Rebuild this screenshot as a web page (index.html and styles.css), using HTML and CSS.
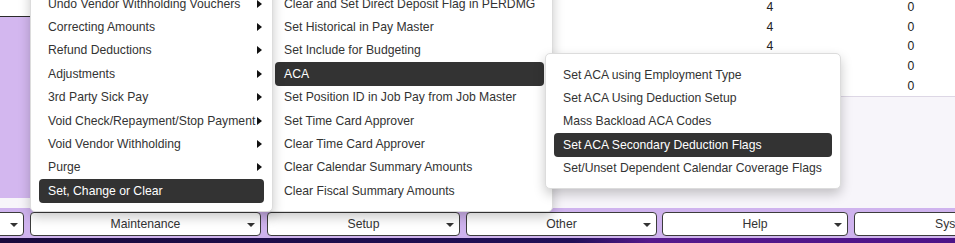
FILE: index.html
```html
<!DOCTYPE html>
<html lang="en">

<head>
    <meta charset="UTF-8">
    <meta name="viewport" content="width=device-width, initial-scale=1.0">
    <title>Payroll Utilities</title>
    <link rel="stylesheet" href="styles.css">
</head>

<body>
    <div class="app">
        <div class="main">
            <div class="side">
                <div class="side-head"></div>
                <div class="side-body"></div>
            </div>

            <div class="content">
                <div class="grid">
                    <div class="row"><span></span><span class="num">4</span><span></span><span class="num">0</span></div>
                    <div class="row"><span></span><span class="num">4</span><span></span><span class="num">0</span></div>
                    <div class="row"><span></span><span class="num">4</span><span></span><span class="num">0</span></div>
                    <div class="row"><span></span><span class="num">4</span><span></span><span class="num">0</span></div>
                    <div class="row"><span></span><span class="num">4</span><span></span><span class="num">0</span></div>
                </div>
            </div>

            <!-- open menu chain: Utilities > Set, Change or Clear > ACA -->
            <ul class="menu menu-main">
                <li class="sub">Undo Vendor Withholding Vouchers</li>
                <li class="sub">Correcting Amounts</li>
                <li class="sub">Refund Deductions</li>
                <li class="sub">Adjustments</li>
                <li class="sub">3rd Party Sick Pay</li>
                <li class="sub">Void Check/Repayment/Stop Payment</li>
                <li class="sub">Void Vendor Withholding</li>
                <li class="sub">Purge</li>
                <li class="active">Set, Change or Clear</li>
            </ul>

            <ul class="menu menu-set">
                <li>Clear and Set Direct Deposit Flag in PERDMG</li>
                <li>Set Historical in Pay Master</li>
                <li>Set Include for Budgeting</li>
                <li class="active">ACA</li>
                <li>Set Position ID in Job Pay from Job Master</li>
                <li>Set Time Card Approver</li>
                <li>Clear Time Card Approver</li>
                <li>Clear Calendar Summary Amounts</li>
                <li>Clear Fiscal Summary Amounts</li>
            </ul>

            <ul class="menu menu-aca">
                <li>Set ACA using Employment Type</li>
                <li>Set ACA Using Deduction Setup</li>
                <li>Mass Backload ACA Codes</li>
                <li class="active">Set ACA Secondary Deduction Flags</li>
                <li>Set/Unset Dependent Calendar Coverage Flags</li>
            </ul>
        </div>

        <div class="toolbar">
            <div class="drop drop-first"></div>
            <div class="drop drop-maint">Maintenance</div>
            <div class="drop drop-setup">Setup</div>
            <div class="drop drop-other">Other</div>
            <div class="drop drop-help">Help</div>
            <div class="drop drop-sys">System</div>
        </div>

        <div class="footer"></div>
    </div>
</body>

</html>
```

FILE: styles.css
```css
* {
    box-sizing: border-box;
}

html,
body {
    margin: 0;
}

body {
    font-family: "Liberation Sans", Arial, sans-serif;
    font-size: 12.2px;
    color: #333;
    overflow: hidden;
}

.app {
    position: relative;
    width: 955px;
    height: 243px;
    display: flex;
    flex-direction: column;
    overflow: hidden;
}

.main {
    height: 208px;
    display: flex;
    background: #f7f5fa;
}

.side {
    width: 120px;
    display: flex;
    flex-direction: column;
    margin-bottom: 10px;
}

.side-head {
    height: 17px;
    background: #fff;
    border-bottom: 1px solid #2b2b2b;
}

.side-body {
    flex: 1;
    background: #d3b7ef;
}

.content {
    flex: 1;
}

.grid {
    margin-top: -3px;
    background: #fff;
    border-bottom: 1px solid #ddd7e5;
}

.row {
    display: grid;
    grid-template-columns: 1fr 62px 79px 62px 13px;
    height: 19.75px;
    align-items: center;
}

.num {
    text-align: center;
    color: #222;
}

/* menus */
.menu {
    position: absolute;
    margin: 0;
    padding: 9px 8px 8px 8px;
    list-style: none;
    background: #fff;
    border: 1px solid #dcdcdc;
    border-radius: 5px;
    box-shadow: 0 5px 12px rgba(0, 0, 0, 0.22);
}

.menu li {
    height: 23.4px;
    padding: 0 2px 0 9px;
    border-radius: 4px;
    display: flex;
    align-items: center;
    justify-content: space-between;
    white-space: nowrap;
}

.menu li.sub::after {
    content: "";
    border-left: 5px solid #111;
    border-top: 4px solid transparent;
    border-bottom: 4px solid transparent;
}

.menu li.active {
    background: #333;
    color: #fff;
}

.menu-main {
    left: 30px;
    top: -18px;
    width: 243px;
    z-index: 2;
}

.menu-set {
    left: 266px;
    top: -18px;
    width: 287px;
    z-index: 1;
}

.menu-aca {
    left: 545px;
    top: 53px;
    width: 296px;
    z-index: 3;
}

/* bottom dropdown bar */
.toolbar {
    height: 30px;
    padding: 4px 0 2px;
    display: flex;
    gap: 6px;
    background: #cfb3ee;
}

.drop {
    position: relative;
    flex: none;
    height: 24px;
    background: #fff;
    border: 1px solid #3c3c3c;
    border-radius: 4px;
    text-align: center;
    line-height: 22px;
    color: #333;
}

.drop::after {
    content: "";
    position: absolute;
    right: 5px;
    top: 10px;
    border-left: 4px solid transparent;
    border-right: 4px solid transparent;
    border-top: 4px solid #333;
}

.drop-first {
    width: 120px;
    margin-left: -96px;
}

.drop-maint {
    width: 231px;
}

.drop-setup {
    width: 193px;
}

.drop-other {
    width: 191px;
}

.drop-help {
    width: 186px;
    margin-left: -1px;
}

.drop-sys {
    width: 190px;
    text-align: left;
    padding-left: 80px;
}

.footer {
    height: 5px;
    background: linear-gradient(90deg, #190a3c 0%, #211058 60%, #55198c 68%, #4c1488 100%);
}
```
